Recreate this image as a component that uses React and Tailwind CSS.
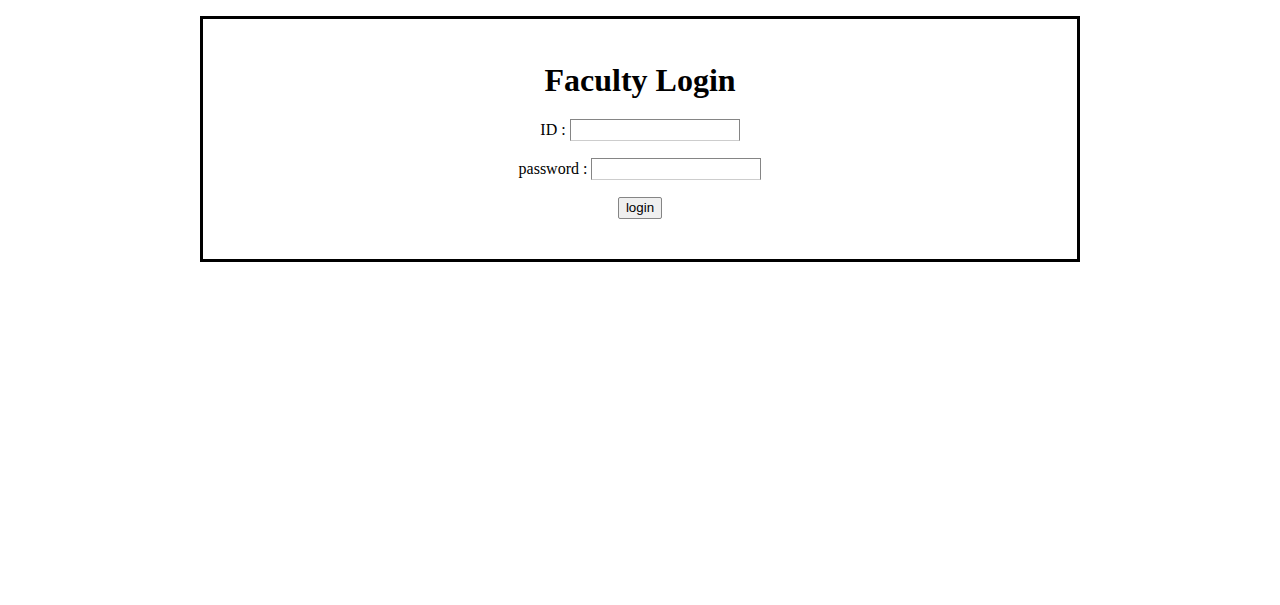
import React, { useState } from 'react';

export default function App() {
    const [id, setId] = useState('');
    const [password, setPassword] = useState('');

    return (
        <div className="min-h-screen bg-white pt-4 font-['Liberation_Serif',serif] text-black">
            <div className="mx-auto w-[880px] border-[3px] border-black pt-[43px] pb-[40px]">
                <h1 className="text-center text-[32px] font-bold leading-[37px]">Faculty Login</h1>
                <div className="mt-[20px] flex flex-col items-center gap-[17px]">
                    <div className="flex h-[22px] items-center text-[16px]">
                        <span>ID :</span>
                        <input
                            type="text"
                            value={id}
                            onChange={e => setId(e.target.value)}
                            className="ml-[4px] h-[22px] w-[170px] border border-[#858585] border-b-[#cdcdcd] bg-white px-[2px] text-[13px] outline-none"
                        />
                    </div>
                    <div className="flex h-[22px] items-center text-[16px]">
                        <span>password :</span>
                        <input
                            type="password"
                            value={password}
                            onChange={e => setPassword(e.target.value)}
                            className="ml-[4px] h-[22px] w-[170px] border border-[#858585] border-b-[#cdcdcd] bg-white px-[2px] text-[13px] outline-none"
                        />
                    </div>
                    <button className="h-[22px] w-[44px] rounded-[2px] border border-[#858585] bg-[#efefef] font-['Liberation_Sans',sans-serif] text-[13.33px] leading-none text-black">
                        login
                    </button>
                </div>
            </div>
        </div>
    );
}
